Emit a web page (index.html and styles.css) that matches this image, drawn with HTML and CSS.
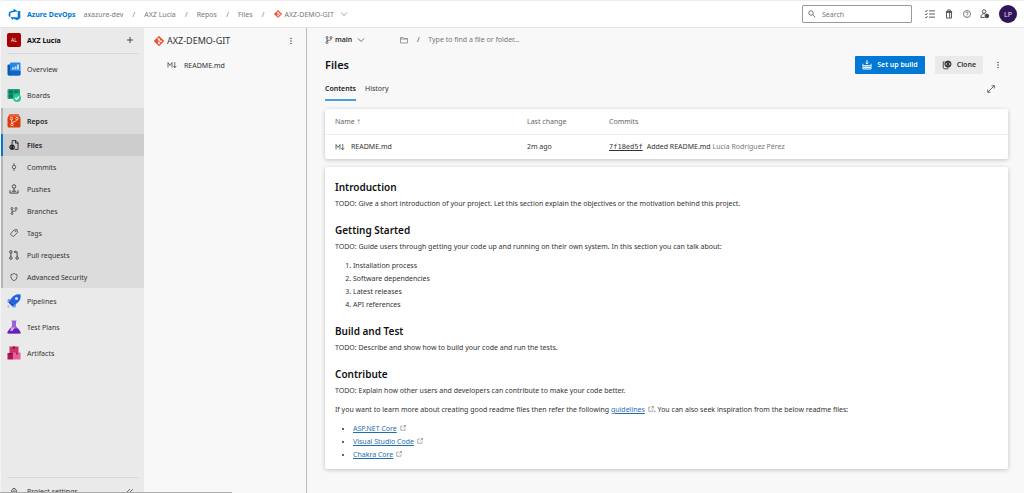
FILE: index.html
```html
<!DOCTYPE html>
<html lang="en">
<head>
<meta charset="utf-8">
<title>Files - Repos</title>
<link rel="stylesheet" href="styles.css">
</head>
<body>
<svg class="defs" aria-hidden="true">
  <symbol id="git" viewBox="0 0 16 16"><path fill="#f05133" d="M8 1 15 8 8 15 1 8z" stroke="#f05133" stroke-width="2" stroke-linejoin="round"/><path d="M5.500 3 8 5.500v6M8 5.500l3 3" stroke="#fff" stroke-width="1.300" fill="none"/><g fill="#fff" stroke="none"><circle cx="8" cy="5.500" r="1.500"/><circle cx="8" cy="11.500" r="1.500"/><circle cx="11.200" cy="8.500" r="1.500"/></g></symbol>
  <symbol id="chevron" viewBox="0 0 16 16"><path d="m2 5 6 6 6-6"/></symbol>
  <symbol id="dots" viewBox="0 0 16 16"><g fill="currentColor" stroke="none"><circle cx="8" cy="3" r="1.300"/><circle cx="8" cy="8" r="1.300"/><circle cx="8" cy="13" r="1.300"/></g></symbol>
  <symbol id="branch" viewBox="0 0 16 16"><circle cx="4" cy="3" r="2"/><circle cx="12" cy="3" r="2"/><circle cx="4" cy="13" r="2"/><path d="M4 5v6M12 5v1.500C12 8 11 8.500 9.500 8.500H4"/></symbol>
  <symbol id="markdown" viewBox="0 0 20 16"><path d="M2 13V3l4 6 4-6v10M15.500 2v11M12.500 10l3 3.500 3-3.500"/></symbol>
  <symbol id="external" viewBox="0 0 16 16"><path d="M7 3H2v11h11V9M9.500 1.500h5v5M14.500 1.500 9 7"/></symbol>
</svg>

<header class="topbar">
  <nav class="crumbs" aria-label="Breadcrumb">
    <a class="brand" href="#"><svg class="logo" viewBox="0 0 18 18"><path fill="#0078d4" d="M17 4v9.700l-4 3.300-6.200-2.300V17L3.300 12.400l10.200.8V4.400L17 4zm-3.400.5L7.800 1v2.300L2.500 4.900 1 6.900v4.600l2.300 1V6.600l10.300-2.100z"/></svg>Azure DevOps</a>
    <a class="org" href="#">axazure-dev</a><span class="slash">/</span>
    <a href="#">AXZ Lucía</a><span class="slash">/</span>
    <a href="#">Repos</a><span class="slash">/</span>
    <a href="#">Files</a><span class="slash">/</span>
    <button class="plain repo-pick"><svg class="i8"><use href="#git"/></svg>AXZ-DEMO-GIT<svg class="i8 chev"><use href="#chevron"/></svg></button>
  </nav>
  <div class="tools">
    <label class="search"><svg class="i8" viewBox="0 0 16 16"><circle cx="6" cy="6" r="4.500"/><path d="m9.500 9.500 5 5"/></svg><input type="search" placeholder="Search" aria-label="Search"></label>
    <button class="plain" aria-label="Work items"><svg class="i10" viewBox="0 0 16 16"><path d="m0 3 1.500 1.500L4 1.500M0 8l1.500 1.500L4 6.500M0 13l1.500 1.500L4 11.500M6.500 3H16M6.500 8H16M6.500 13H16"/></svg></button>
    <button class="plain" aria-label="Marketplace"><svg class="i10" viewBox="0 0 16 16"><path d="M4 5h8v9.500H4zM6 5V1.500h4V5M9 5v9"/><path d="M3 4.500h10" stroke-width="2"/></svg></button>
    <button class="plain" aria-label="Help"><svg class="i8" viewBox="0 0 16 16"><circle cx="8" cy="8" r="7"/><path d="M5.800 6.300C6 3.300 10.500 3.600 10.200 6.300 10 7.800 8 7.800 8 9.800M8 11.200v1.500"/></svg></button>
    <button class="plain" aria-label="User settings"><svg class="i10" viewBox="0 0 16 16"><circle cx="6.500" cy="4" r="2.800"/><path d="M8 7.500C4 7 1.500 9 1.500 13.500h6"/><circle cx="11" cy="11" r="3" fill="currentColor"/></svg></button>
    <button class="plain avatar" aria-label="Account">LP</button>
  </div>
</header>

<div class="shell">
  <aside class="sidebar">
    <div class="project"><span class="badge">AL</span><strong>AXZ Lucía</strong><button class="plain" aria-label="Add"><svg class="i8" viewBox="0 0 16 16"><path d="M8 2v12M2 8h12"/></svg></button></div>
    <nav class="menu" aria-label="Project">
      <a class="hub" href="#"><svg class="i14" viewBox="0 0 28 28"><path fill="#0a5ca8" d="M1 7q0-2 2-2h4v22H4q-3 0-3-3z"/><path fill="#2b88e0" d="M6 3q0-2 2-2h17q2 0 2 2v21q0 3-3 3H4q2-1 2-3z"/><path fill="#1163c4" d="M6 18h21v6q0 3-3 3H4q2-1 2-3z"/><path fill="#b5dcff" d="M10 15v-4h4v4zm5 0V9h4v6zm5 0V5h4v10z"/></svg>Overview</a>
      <a class="hub" href="#"><svg class="i14" viewBox="0 0 28 28"><rect x="1" y="2" width="25" height="20" rx="2" fill="#21a37e"/><path fill="#0c7558" d="M4 5h8v6H4zM14 5h9v4h-9zM4 13h8v6H4z"/><circle cx="20" cy="20" r="8" fill="#29c79b"/><path d="m16 20 3 3 5-6" stroke="#fff" stroke-width="2.500" fill="none"/></svg>Boards</a>
      <div class="group">
        <a class="hub strong" href="#"><svg class="i14" viewBox="0 0 28 28"><path fill="#d93b0c" d="M5 1h18l4 7v16q0 3-3 3H4q-3 0-3-3V8z"/><path fill="#f0572b" d="M5 1h18l3 5H2z"/><g stroke="#ffd9cc" stroke-width="1.800" fill="none"><circle cx="9" cy="9" r="2.500"/><circle cx="20" cy="9" r="2.500"/><circle cx="10" cy="21" r="2.500"/><path d="m9 11 1 8M20 11c0 5-9 3-10 8"/></g></svg>Repos</a>
        <a class="sub active" href="#" aria-current="page"><svg class="i10" viewBox="0 0 16 16"><path d="M5 7V1h6l3.500 3.500V15H9M10.500 1v4h4"/><circle cx="5" cy="11.500" r="3.800" fill="currentColor"/><path d="M3.500 10 2.500 11.500l1 1.500M6.500 10l1 1.500-1 1.500" stroke="#cdcdcd" stroke-width=".8"/></svg>Files</a>
        <a class="sub" href="#"><svg class="i8" viewBox="0 0 16 16"><circle cx="8" cy="8" r="3.500"/><path d="M8 0v4.500M8 11.500V16"/></svg>Commits</a>
        <a class="sub" href="#"><svg class="i10" viewBox="0 0 16 16"><circle cx="8" cy="4" r="2.800"/><path d="M8 7v4.500M1.500 10v4.500h13V10M4.500 11.500h7"/></svg>Pushes</a>
        <a class="sub" href="#"><svg class="i8"><use href="#branch"/></svg>Branches</a>
        <a class="sub" href="#"><svg class="i8" viewBox="0 0 16 16"><path d="m8 2 6-1 1 6-7.500 7.500Q6 15.500 4.500 14L2 11.500Q.5 10 2 8.500z"/><circle cx="11.500" cy="4.500" r=".7"/></svg>Tags</a>
        <a class="sub" href="#"><svg class="i10" viewBox="0 0 16 16"><circle cx="3" cy="3" r="2"/><circle cx="3" cy="13" r="2"/><circle cx="13" cy="13" r="2"/><path d="M3 5v6M13 11V3H8.500M10.500 1l-2 2 2 2"/></svg>Pull requests</a>
        <a class="sub" href="#"><svg class="i8" viewBox="0 0 16 16"><path d="M8 1q3 2 6 2v5q0 5-6 7.500Q2 13 2 8V3q3 0 6-2z"/></svg>Advanced Security</a>
      </div>
      <a class="hub" href="#"><svg class="i14" viewBox="0 0 28 28"><path fill="#6f9cf5" d="M3 10h9l-3 7H1v-4q0-3 2-3zM18 16v8q0 3-3 3h-4v-7z"/><path fill="#2560e0" d="M27 1q2 12-9 19l-4 2-8-8 2-4Q15-1 27 1z"/><circle cx="19" cy="9" r="3" fill="#d5e3ff"/><path fill="#1747b5" d="m6 14 8 8-3 3-8-8z"/><path fill="#a9c3ff" d="M1 22h4v5H1z"/></svg>Pipelines</a>
      <a class="hub" href="#"><svg class="i14" viewBox="0 0 28 28"><path fill="#9a62d6" d="M9 1h10v2h-1v9l9 12q1 3-2 3H3q-3 0-2-3l9-12V3H9z"/><path fill="#6420b8" d="M6 17h16l5 7q1 3-2 3H3q-3 0-2-3z"/><path fill="#cfa6ff" d="M9 15h7l-5 7H6z"/></svg>Test Plans</a>
      <a class="hub" href="#"><svg class="i14" viewBox="0 0 28 28"><path fill="#cf2f6b" d="M5 1h18v13H5z"/><path fill="#b01855" d="M1 14h12v13H1z"/><path fill="#e8609a" d="M13 13h14v14H13z"/><path fill="#7d0c3a" d="M12 1h4v4h-4zM5 14h4v4H5z"/><path fill="#a81d58" d="M18 13h4v4h-4z"/></svg>Artifacts</a>
    </nav>
    <div class="settings"><a href="#"><svg class="i8" viewBox="0 0 16 16"><circle cx="8" cy="8" r="2.500"/><path d="M6 1h4v2l3 1.500v7L10 13v2H6v-2l-3-1.500v-7L6 3z"/></svg>Project settings</a><button class="plain" aria-label="Collapse"><svg class="i8" viewBox="0 0 16 16"><path d="M8 2 2 8l6 6M14 2 8 8l6 6"/></svg></button></div>
  </aside>

  <section class="tree" aria-label="Repository tree">
    <div class="tree-head"><svg class="i10"><use href="#git"/></svg><span>AXZ-DEMO-GIT</span><button class="plain" aria-label="More"><svg class="i8"><use href="#dots"/></svg></button></div>
    <a class="tree-file" href="#"><svg class="i10"><use href="#markdown"/></svg>README.md</a>
  </section>

  <main class="main">
    <div class="pathbar">
      <button class="plain branch-pick"><svg class="i8"><use href="#branch"/></svg>main<svg class="i8"><use href="#chevron"/></svg></button>
      <svg class="i8 folder" viewBox="0 0 16 16"><path d="M1 3h5l1.500 2H15v9H1zM1 6h14"/></svg><span class="slash">/</span>
      <input class="path" type="text" placeholder="Type to find a file or folder..." aria-label="Path">
    </div>
    <div class="titlebar">
      <h1>Files</h1>
      <button class="btn primary"><svg class="i10" viewBox="0 0 16 16"><path d="M8 0v6M6 4l2 2.500L10 4M1.500 6v8.500h13V6M1.500 9h13M1.500 12h13M5 9v5M8 9v5M11 9v5"/></svg>Set up build</button>
      <button class="btn"><svg class="i10" viewBox="0 0 16 16"><path d="M4 3H2v9q0 2 2 2h6"/><circle cx="9.500" cy="6.500" r="5" fill="currentColor"/><path d="m8 4.500-2 2 2 2M11 4.500l2 2-2 2" stroke="#eaeaea"/></svg>Clone</button>
      <button class="plain more" aria-label="More actions"><svg class="i8"><use href="#dots"/></svg></button>
    </div>
    <div class="tabs">
      <a class="tab selected" href="#">Contents</a><a class="tab" href="#">History</a>
      <button class="plain expand" aria-label="Full screen"><svg class="i8" viewBox="0 0 16 16"><path d="M1.500 14.500l13-13M9 1.500h5.500V7M1.500 9v5.500H7"/></svg></button>
    </div>

    <table class="card files">
      <thead><tr><th class="c-name">Name <span class="sort">↑</span></th><th class="c-change">Last change</th><th>Commits</th></tr></thead>
      <tbody><tr><td class="c-name"><a class="file" href="#"><svg class="i10"><use href="#markdown"/></svg>README.md</a></td><td>2m ago</td><td><a class="hash" href="#">7f18ed5f</a>Added README.md <span class="author">Lucía Rodríguez Pérez</span></td></tr></tbody>
    </table>

    <article class="card readme">
      <h2>Introduction</h2>
      <p>TODO: Give a short introduction of your project. Let this section explain the objectives or the motivation behind this project.</p>
      <h2>Getting Started</h2>
      <p>TODO: Guide users through getting your code up and running on their own system. In this section you can talk about:</p>
      <ol><li>Installation process</li><li>Software dependencies</li><li>Latest releases</li><li>API references</li></ol>
      <h2>Build and Test</h2>
      <p>TODO: Describe and show how to build your code and run the tests.</p>
      <h2>Contribute</h2>
      <p>TODO: Explain how other users and developers can contribute to make your code better.</p>
      <p class="next">If you want to learn more about creating good readme files then refer the following <a href="#">guidelines</a><svg class="ext"><use href="#external"/></svg>. You can also seek inspiration from the below readme files:</p>
      <ul><li><a href="#">ASP.NET Core</a><svg class="ext"><use href="#external"/></svg></li><li><a href="#">Visual Studio Code</a><svg class="ext"><use href="#external"/></svg></li><li><a href="#">Chakra Core</a><svg class="ext"><use href="#external"/></svg></li></ul>
    </article>
  </main>
</div>
<div class="status"></div>
</body>
</html>
```
FILE: styles.css
```css
* { box-sizing: border-box; }
body {
  margin: 0;
  height: 100vh;
  display: flex;
  flex-direction: column;
  overflow: hidden;
  background: #f8f8f8;
  color: #333;
  font: 7px/13px "Noto Sans", "Open Sans", sans-serif;
}
a { color: inherit; text-decoration: none; }
svg { flex: none; fill: none; stroke: currentColor; stroke-width: 1.4; }
.defs { position: absolute; width: 0; height: 0; }
.i8 { width: 8px; height: 8px; }
.i10 { width: 10px; height: 10px; }
.i14 { width: 14px; height: 14px; stroke: none; }
button, input { font: inherit; color: inherit; }
.plain { display: flex; align-items: center; padding: 0; border: 0; background: none; }

.topbar {
  flex: none;
  display: flex;
  align-items: center;
  justify-content: space-between;
  height: 27px;
  padding: 0 7px 0 8px;
  border-top: 1px solid #eee;
  border-radius: 4px 0 0 0;
  background: #fff;
  box-shadow: 0 1px 1px #e4e4e4;
  z-index: 1;
}
.crumbs { display: flex; align-items: center; color: #777; }
.brand { display: flex; align-items: center; gap: 6px; margin-right: 8px; color: #0078d4; font-weight: 700; }
.logo { width: 13px; height: 13px; stroke: none; }
.crumbs .slash { width: 21px; text-align: center; }
.repo-pick { gap: 3px; }
.chev { margin-left: 3px; }
.tools { display: flex; align-items: center; gap: 9px; color: #444; }
.search { display: flex; align-items: center; gap: 6px; width: 110px; height: 18px; margin-right: 4px; padding: 0 5px; border: 1px solid #999; border-radius: 1px; }
.search input, .path { flex: 1; min-width: 0; padding: 0; border: 0; outline: 0; background: none; }
::placeholder { color: #777; opacity: 1; }
.avatar { justify-content: center; width: 18px; height: 18px; border-radius: 50%; background: #32145a; color: #e8e0f2; }

.shell { flex: 1; min-height: 0; display: flex; }
.sidebar { flex: none; display: flex; flex-direction: column; width: 144px; border-left: 1px solid #f4f4f4; background: #eaeaea; }
.project { display: flex; align-items: center; gap: 6px; height: 27px; margin: 0 6px; border-bottom: 1px solid #d6d6d6; color: #111; }
.project strong { flex: 1; }
.project .plain { margin-right: 4px; }
.badge { width: 14px; height: 14px; border-radius: 2px; background: #a80000; color: #fff; font-size: 5px; line-height: 14px; text-align: center; }
.menu { flex: 1; padding-top: 2px; }
.hub, .sub { display: flex; align-items: center; gap: 6px; padding-left: 6px; }
.hub { height: 26px; }
.sub { height: 22px; }
.sub svg { margin: 0 2px; }
.sub .i8 { margin: 0 3px; }
.group { background: #dcdcdc; box-shadow: inset 2px 0 #b4b4b4; }
.strong, .active { font-weight: 600; color: #222; }
.active { background: #cdcdcd; box-shadow: inset 2px 0 #0078d4; }
.settings { display: flex; justify-content: space-between; height: 16px; margin: 0 6px; padding: 7px 4px 0 3px; border-top: 1px solid #d6d6d6; overflow: hidden; }
.settings a { display: flex; align-items: center; gap: 9px; height: 13px; }
.settings .plain { height: 13px; }

.tree { flex: none; width: 163px; border-right: 1px solid #bbb; }
.tree-head { display: flex; align-items: center; gap: 3px; height: 27px; padding: 0 11px 0 10px; font-size: 9px; }
.tree-head span { flex: 1; }
.tree-file { display: flex; align-items: center; gap: 7px; height: 22px; padding-left: 23px; }

.main { flex: 1; min-width: 0; padding: 0 16px 0 18px; }
.pathbar { display: flex; align-items: center; height: 25px; }
.branch-pick { gap: 2px; font-weight: 600; }
.branch-pick svg:last-child { margin-left: 3px; }
.folder { margin-left: 35px; color: #777; }
.pathbar .slash { width: 20px; text-align: center; }
.titlebar { display: flex; align-items: center; height: 25px; }
h1 { flex: 1; margin: 0; color: #111; font-size: 11px; font-weight: 600; }
.btn { display: flex; align-items: center; gap: 5px; height: 18px; padding: 0 7px; border: 0; border-radius: 1px; background: #eaeaea; font-weight: 600; }
.primary { margin-right: 10px; background: #0078d4; color: #fff; }
.more { margin: 0 6px 0 11px; }
.tabs { display: flex; gap: 9px; height: 24px; }
.tab { height: 24px; line-height: 23px; }
.selected { border-bottom: 2px solid #4a9de0; font-weight: 600; color: #222; }
.expand { margin: 0 13px 0 auto; }

.card { width: 100%; border-radius: 2px; background: #fff; box-shadow: 0 1px 4px rgba(0, 0, 0, .22); }
.files { margin-top: 8px; border-collapse: collapse; table-layout: fixed; }
.files th { height: 25px; padding: 0; border-bottom: 1px solid #eee; color: #666; font-weight: 400; text-align: left; }
.files td { height: 25px; padding: 0; }
.files .c-name { width: 202px; padding-left: 10px; }
.files .c-change { width: 82px; }
.file { display: flex; align-items: center; gap: 6px; }
.sort { font-size: 8px; }
.hash { margin-right: 4px; font-family: "DejaVu Sans Mono", monospace; text-decoration: underline; }
.author { color: #777; }
.readme { margin-top: 8px; padding: 12px 10px 8px; }
h2 { margin: 12px 0 2px; color: #111; font-size: 10px; line-height: 16px; font-weight: 600; }
h2:first-child { margin-top: 0; }
p { margin: 0; }
.next { margin-top: 6px; }
ol, ul { margin: 6px 0 11px; padding-left: 18px; }
ul { margin-bottom: 0; }
.readme a { color: #1f6fb0; text-decoration: underline; }
.ext { width: 6px; height: 6px; margin-left: 3px; color: #666; }

.status { position: absolute; left: 0; bottom: 0; width: 232px; height: 1px; background: #aaa; }
```
